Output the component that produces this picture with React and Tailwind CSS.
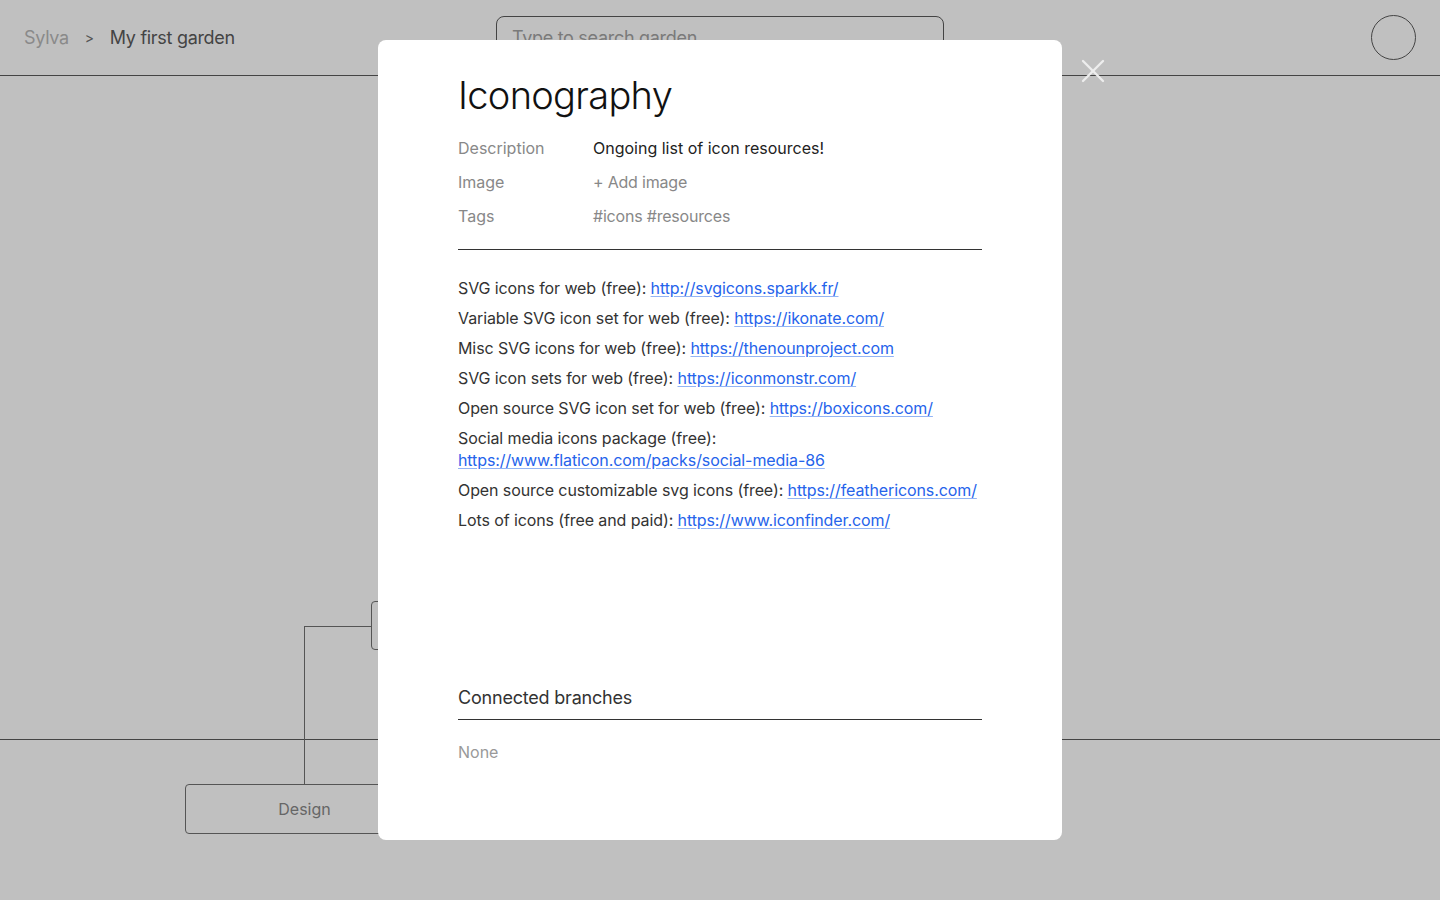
import React from 'react';
import { X } from 'lucide-react';

const resources = [
  { label: 'SVG icons for web (free):', url: 'http://svgicons.sparkk.fr/' },
  { label: 'Variable SVG icon set for web (free):', url: 'https://ikonate.com/' },
  { label: 'Misc SVG icons for web (free):', url: 'https://thenounproject.com' },
  { label: 'SVG icon sets for web (free):', url: 'https://iconmonstr.com/' },
  { label: 'Open source SVG icon set for web (free):', url: 'https://boxicons.com/' },
  { label: 'Social media icons package (free):', url: 'https://www.flaticon.com/packs/social-media-86', wrap: true },
  { label: 'Open source customizable svg icons (free):', url: 'https://feathericons.com/' },
  { label: 'Lots of icons (free and paid):', url: 'https://www.iconfinder.com/' },
];

const meta = [
  { label: 'Description', value: 'Ongoing list of icon resources!', muted: false },
  { label: 'Image', value: '+ Add image', muted: true },
  { label: 'Tags', value: '#icons #resources', muted: true },
];

export default function App() {
  return (
    <div className="relative w-full h-[900px] overflow-hidden bg-[#c0c0c0] text-[#444] font-['Inter',sans-serif]">
      {/* Header */}
      <header className="h-[76px] flex items-center justify-between pl-6 pr-[24px] border-b border-[#444]">
        <nav className="flex items-center text-[18px] tracking-[-0.3px] w-[472px]">
          <span className="text-[#8a8a8a]">Sylva</span>
          <span className="ml-[16px] mr-[16px] text-[14px] text-[#555]">&gt;</span>
          <span className="text-[#444]">My first garden</span>
        </nav>
        <div className="flex-1 flex">
          <div className="w-[448px] h-[44px] rounded-lg border border-[#444] flex items-center pl-[15px] text-[18px] tracking-[-0.3px] text-[#7a7a7a]">
            Type to search garden
          </div>
        </div>
        <div className="w-[45px] h-[45px] rounded-full border border-[#444]" />
      </header>

      {/* Canvas */}
      <div className="relative h-[824px]">
        <div className="absolute left-0 right-0 top-[663px] border-t border-[#444]" />
        <div className="absolute left-[304px] top-[550px] w-[67px] h-[158px] border-l border-t border-[#555]" />
        <div className="absolute left-[371px] top-[525px] w-[200px] h-[49px] rounded border border-[#555]" />
        <div className="absolute left-[185px] top-[708px] w-[239px] h-[50px] rounded border border-[#555] flex items-center justify-center text-[16px] text-[#666]">
          Design
        </div>
      </div>

      {/* Modal */}
      <div className="absolute left-[378px] top-[40px] w-[684px] h-[800px] bg-white rounded-lg pl-20 pr-20 pt-[33px]">
        <h1 className="text-[38px] leading-[44px] font-light text-[#111] tracking-[-0.7px]">Iconography</h1>

        <div className="mt-[20px] flex flex-col gap-[12px] text-[16px] leading-[22px]">
          {meta.map((row) => (
            <div key={row.label} className="flex">
              <span className="w-[135px] text-[#888]">{row.label}</span>
              <span className={row.muted ? 'text-[#888] tracking-[-0.2px]' : 'text-[#222]'}>{row.value}</span>
            </div>
          ))}
        </div>

        <div className="mt-[22px] border-t border-[#333]" />

        <ul className="mt-[27px] flex flex-col gap-[8px] text-[16px] leading-[22px] tracking-[-0.1px] text-[#333]">
          {resources.map((r) => (
            <li key={r.url} className={r.wrap ? '' : 'whitespace-nowrap'}>
              {r.label}
              {r.wrap ? <br /> : ' '}
              <a href={r.url} className="text-[#2563eb] underline decoration-[#93b4f5] underline-offset-2">
                {r.url}
              </a>
            </li>
          ))}
        </ul>

        <h2 className="mt-[155px] text-[18px] leading-[24px] tracking-[-0.2px] text-[#333]">Connected branches</h2>
        <div className="mt-[9px] border-t border-[#333]" />
        <p className="mt-[21px] text-[16px] leading-[22px] text-[#999]">None</p>
      </div>

      {/* Close */}
      <button className="absolute left-[1073px] top-[51px] text-[#eeeeee]">
        <X size={40} strokeWidth={1.4} />
      </button>
    </div>
  );
}
